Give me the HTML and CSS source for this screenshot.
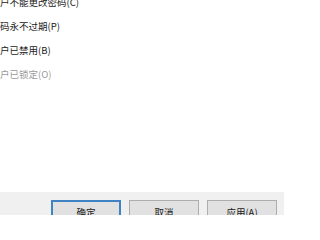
FILE: index.html
```html
<!DOCTYPE html>
<html lang="zh-CN">
<head>
<meta charset="utf-8">
<link rel="stylesheet" href="styles.css">
</head>
<body>
<div class="dialog">
  <div class="options">
    <div class="opt">户不能更改密码(C)</div>
    <div class="opt">码永不过期(P)</div>
    <div class="opt">户已禁用(B)</div>
    <div class="opt disabled">户已锁定(O)</div>
  </div>
  <div class="footer">
    <button class="btn default">确定</button>
    <button class="btn">取消</button>
    <button class="btn">应用(A)</button>
  </div>
</div>
</body>
</html>
```
FILE: styles.css
```css
html, body {
  margin: 0;
  padding: 0;
  background: #ffffff;
  height: 215px;
  overflow: hidden;
}
.dialog {
  display: flex;
  flex-direction: column;
  width: 284px;
  height: 215px;
  font-family: "Noto Sans CJK SC", "Microsoft YaHei", sans-serif;
  font-size: 9.5px;
  color: #1a1a1a;
}
.options {
  flex: 1;
  display: flex;
  flex-direction: column;
  gap: 10px;
  margin-top: -5px;
}
.opt {
  height: 14px;
  line-height: 14px;
  white-space: nowrap;
}
.opt.disabled {
  color: #9a9a9a;
}
.footer {
  height: 15px;
  background: #f0f0f0;
  display: flex;
  align-items: flex-start;
  justify-content: flex-end;
  gap: 8px;
  padding: 8px 7px 0 0;
  flex: none;
}
.btn {
  width: 70px;
  height: 24px;
  box-sizing: border-box;
  background: #e1e1e1;
  border: 1px solid #adadad;
  font-family: inherit;
  font-size: 9.5px;
  color: #1a1a1a;
  padding: 0;
  margin: 0;
  flex: none;
}
.btn.default {
  border: 2px solid #3f83c4;
}
```
